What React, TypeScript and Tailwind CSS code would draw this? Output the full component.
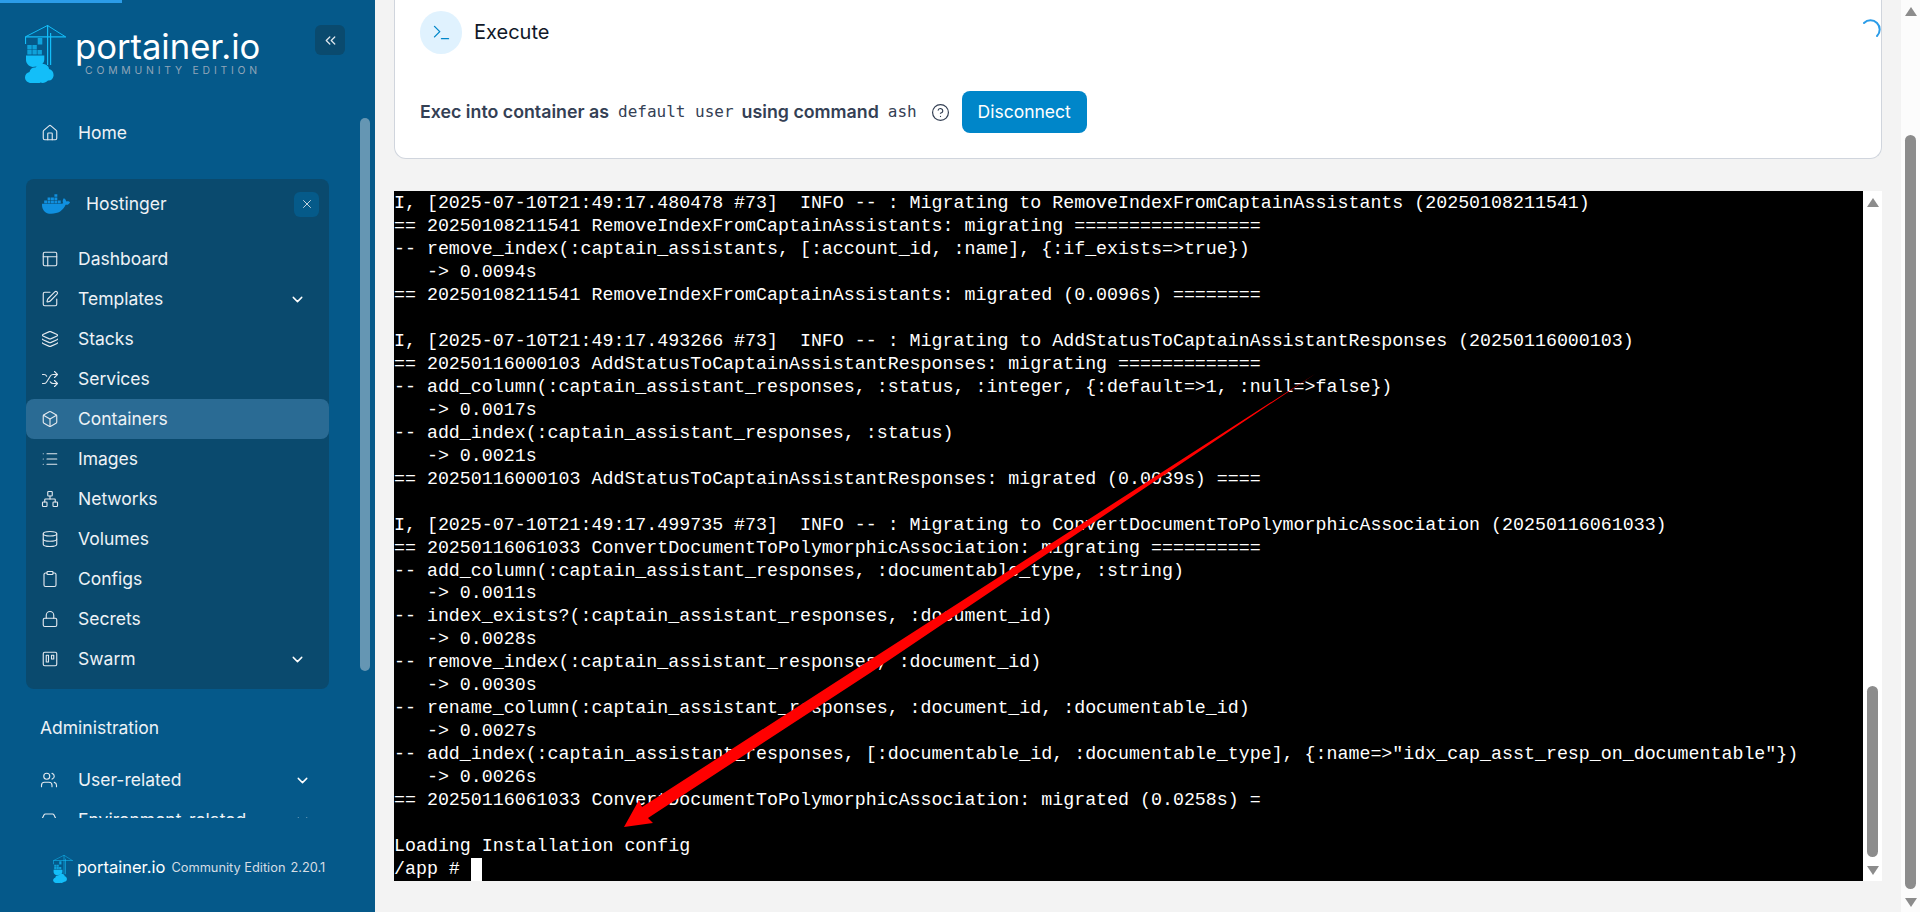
import React from 'react';
import { Home, PanelsTopLeft, SquarePen, Layers, Shuffle, Box, List, Network, Database, Clipboard, Lock, Trello, Users, HardDrive, ChevronDown, ChevronsLeft, X, Terminal, CircleHelp } from 'lucide-react';
import { FaDocker } from 'react-icons/fa';

const LOG = `I, [2025-07-10T21:49:17.480478 #73]  INFO -- : Migrating to RemoveIndexFromCaptainAssistants (20250108211541)
== 20250108211541 RemoveIndexFromCaptainAssistants: migrating =================
-- remove_index(:captain_assistants, [:account_id, :name], {:if_exists=>true})
   -> 0.0094s
== 20250108211541 RemoveIndexFromCaptainAssistants: migrated (0.0096s) ========

I, [2025-07-10T21:49:17.493266 #73]  INFO -- : Migrating to AddStatusToCaptainAssistantResponses (20250116000103)
== 20250116000103 AddStatusToCaptainAssistantResponses: migrating =============
-- add_column(:captain_assistant_responses, :status, :integer, {:default=>1, :null=>false})
   -> 0.0017s
-- add_index(:captain_assistant_responses, :status)
   -> 0.0021s
== 20250116000103 AddStatusToCaptainAssistantResponses: migrated (0.0039s) ====

I, [2025-07-10T21:49:17.499735 #73]  INFO -- : Migrating to ConvertDocumentToPolymorphicAssociation (20250116061033)
== 20250116061033 ConvertDocumentToPolymorphicAssociation: migrating ==========
-- add_column(:captain_assistant_responses, :documentable_type, :string)
   -> 0.0011s
-- index_exists?(:captain_assistant_responses, :document_id)
   -> 0.0028s
-- remove_index(:captain_assistant_responses, :document_id)
   -> 0.0030s
-- rename_column(:captain_assistant_responses, :document_id, :documentable_id)
   -> 0.0027s
-- add_index(:captain_assistant_responses, [:documentable_id, :documentable_type], {:name=>"idx_cap_asst_resp_on_documentable"})
   -> 0.0026s
== 20250116061033 ConvertDocumentToPolymorphicAssociation: migrated (0.0258s) =

Loading Installation config`;

function Logo({ className }: { className: string }) {
  return (
    <svg viewBox="0 0 41 58" className={className} fill="#13bef9">
      <path d="M0 11.2h41v1.2H0z" />
      <path d="M22.5 0.5 L1 11.5 M22.5 0.5 L40 11.5" stroke="#13bef9" strokeWidth="1" fill="none" />
      <path d="M22 0h1.2v40H22zM25 8h1.2v32H25z" />
      <path d="M0 12h1.1v7H0z" />
      <path d="M12.7 13h4.6v6.6h-4.6z" opacity=".75" />
      <path d="M2.3 20h4.4v4.4H2.3zM7.4 20h4.4v4.4H7.4zM2.3 25h4.4v4.4H2.3zM7.4 25h4.4v4.4H7.4zM12.5 25h4.4v4.4h-4.4z" opacity=".72" />
      <path d="M1 30.5h18.3v4c0 3-2 5-4 5.500-3 1-5 2-8 2-4-1-6.300-4-6.300-7z" />
      <path d="M6 58c-3 0-6-2.500-6-5.500 0-3 2-5 4.500-5.500.5-3 3-5 6-4.500 2-3 6-5 10-3 2.500 1 3.500 3 3.500 4.500 3 .5 5 3.500 4.500 7-.5 3-2.500 5-5.500 4.500-2 2-5 3-7.500 2-2 1.500-6 1.500-10 .5z" />
    </svg>
  );
}

function Item({ icon: Icon, label, chevron, active }: { icon: React.ElementType; label: string; chevron?: boolean; active?: boolean }) {
  return (
    <div className={`flex h-10 items-center rounded-lg pl-[15px] pr-[23px] ${active ? 'bg-[#2a6b94]' : ''}`}>
      <Icon className="h-[18px] w-[18px] shrink-0 text-[#e4e9ef]" strokeWidth={1.5} />
      <span className="ml-[19px] flex-1 text-[17.5px] text-[#eef2f6]">{label}</span>
      {chevron && <ChevronDown className="h-[17px] w-[17px] text-white" strokeWidth={2} />}
    </div>
  );
}

function Arrow({ up }: { up?: boolean }) {
  return (
    <div className={`h-0 w-0 border-x-[6px] border-x-transparent ${up ? 'border-b-[9px] border-b-[#8c8c8c]' : 'border-t-[9px] border-t-[#8c8c8c]'}`} />
  );
}

export default function App() {
  const env = [
    { icon: PanelsTopLeft, label: 'Dashboard' },
    { icon: SquarePen, label: 'Templates', chevron: true },
    { icon: Layers, label: 'Stacks' },
    { icon: Shuffle, label: 'Services' },
    { icon: Box, label: 'Containers', active: true },
    { icon: List, label: 'Images' },
    { icon: Network, label: 'Networks' },
    { icon: Database, label: 'Volumes' },
    { icon: Clipboard, label: 'Configs' },
    { icon: Lock, label: 'Secrets' },
    { icon: Trello, label: 'Swarm', chevron: true },
  ];
  return (
    <div className="relative flex h-[912px] w-[1920px] overflow-hidden bg-[#f3f3f3] font-['Inter',sans-serif]">
      <div className="absolute left-0 top-0 z-20 h-[3px] w-[122px] bg-[#2b9ce8]" />

      <aside className="relative flex h-full w-[375px] shrink-0 flex-col bg-[#05598a]">
        <div className="flex h-[119px] shrink-0 items-start pl-[25px] pt-[25px]">
          <Logo className="h-[58px] w-[41px] shrink-0" />
          <div className="ml-[9px] flex w-[190px] shrink-0 flex-col">
            <span className="mt-[2px] whitespace-nowrap text-[34.6px] font-normal leading-[38px] text-white">portainer.io</span>
            <span className="ml-[10px] mt-[-1px] whitespace-nowrap text-[10.4px] leading-[14px] tracking-[3.8px] text-[#8fa5b8]">COMMUNITY EDITION</span>
          </div>
          <div className="ml-[50px] flex h-[30px] w-[30px] shrink-0 items-center justify-center rounded-md bg-[#0a4a6e]">
            <ChevronsLeft className="h-[17px] w-[17px] text-[#dfe6ec]" strokeWidth={1.8} />
          </div>
        </div>

        <nav className="h-[699px] shrink-0 overflow-hidden">
          <div className="ml-[25px] flex h-[28px] w-[310px] items-center pl-[16px]">
            <Home className="h-[18px] w-[18px] text-[#e4e9ef]" strokeWidth={1.5} />
            <span className="ml-[19px] text-[17.5px] text-[#eef2f6]">Home</span>
          </div>

          <div className="ml-[26px] mt-[32px] w-[303px] rounded-lg bg-[#0a4a6e] pb-[10px]">
            <div className="flex h-[48px] items-center pl-[16px] pr-[10px] pt-[2px]">
              <FaDocker className="h-[26px] w-[28px] text-[#1090e0]" />
              <span className="ml-[16px] flex-1 text-[17.5px] text-[#eef2f6]">Hostinger</span>
              <div className="flex h-[25px] w-[25px] items-center justify-center rounded-md bg-[#055a89]">
                <X className="h-[14px] w-[14px] text-[#dfe6ec]" strokeWidth={1.5} />
              </div>
            </div>
            <div className="mt-[12px]">
              {env.map((e) => (
                <Item key={e.label} {...e} />
              ))}
            </div>
          </div>

          <div className="ml-[40px] mt-[25px] text-[17.5px] leading-[28px] text-[#eef2f6]">Administration</div>

          <div className="ml-[25px] mt-[18px] w-[310px]">
            <div className="flex h-10 items-center pl-[15px] pr-[24px]">
              <Users className="h-[18px] w-[18px] text-[#e4e9ef]" strokeWidth={1.5} />
              <span className="ml-[20px] flex-1 text-[17.5px] text-[#eef2f6]">User-related</span>
              <ChevronDown className="h-[17px] w-[17px] text-white" strokeWidth={2} />
            </div>
            <div className="flex h-10 items-center pl-[15px] pr-[24px]">
              <HardDrive className="h-[18px] w-[18px] text-[#e4e9ef]" strokeWidth={1.5} />
              <span className="ml-[20px] flex-1 text-[17.5px] text-[#eef2f6]">Environment-related</span>
              <ChevronDown className="h-[17px] w-[17px] text-white" strokeWidth={2} />
            </div>
          </div>
        </nav>

        <div className="flex flex-1 items-start pl-[53px] pt-[37px]">
          <Logo className="h-[28px] w-[20px] shrink-0" />
          <span className="ml-[4px] mt-[1px] whitespace-nowrap text-[16.5px] leading-[22px] text-white">portainer.io</span>
          <span className="ml-[6px] mt-[3px] whitespace-nowrap text-[12.8px] leading-[20px] text-[#d5dde4]">Community Edition</span>
          <span className="ml-[5px] mt-[3px] text-[12.8px] leading-[20px] text-[#d5dde4]">2.20.1</span>
        </div>

        <div className="absolute left-[360px] top-[118px] h-[553px] w-[10px] rounded-md bg-[#6596b3]" />
      </aside>

      <main className="flex min-w-0 flex-1 flex-col pl-[19px] pr-[19px]">
        <section className="relative h-[159px] w-[1488px] shrink-0 rounded-b-xl border-x border-b border-[#d0d5dd] bg-white pl-[25px]">
          <div className="flex items-center pt-[11px]">
            <div className="flex h-[43px] w-[42px] items-center justify-center rounded-full bg-[#e0f2fe]">
              <Terminal className="h-[21px] w-[21px] text-[#0086c9]" strokeWidth={1.6} />
            </div>
            <span className="ml-[12px] -translate-y-px text-[20px] text-[#101828]">Execute</span>
          </div>
          <div className="mt-[37px] flex items-center">
            <span className="text-[17.8px] font-semibold text-[#344054]">Exec into container as</span>
            <code className="ml-[9px] font-['DejaVu_Sans_Mono',monospace] text-[16px] text-[#344054]">default user</code>
            <span className="ml-[8px] text-[17.8px] font-semibold text-[#344054]">using command</span>
            <code className="ml-[9px] font-['DejaVu_Sans_Mono',monospace] text-[16px] text-[#344054]">ash</code>
            <CircleHelp className="ml-[14px] h-[19px] w-[19px] text-[#344054]" strokeWidth={1.5} />
            <button className="ml-[12px] flex h-[42px] w-[125px] items-center justify-center rounded-lg bg-[#0086c9] text-[17.5px] text-white">Disconnect</button>
          </div>
          <svg viewBox="0 0 20 20" className="absolute right-[-1px] top-[19px] h-5 w-5">
            <path d="M2 4 A 8.5 8.5 0 0 1 15 17" fill="none" stroke="#2b9ce8" strokeWidth="2" strokeLinecap="round" />
          </svg>
        </section>

        <section className="relative mt-[32px] flex h-[690px] w-[1488px] shrink-0 overflow-hidden">
          <div className="w-[1469px] shrink-0 overflow-hidden bg-black pt-[1px]">
            <pre className="font-['Liberation_Mono',monospace] text-[18.3px] leading-[22.97px] text-white">{LOG}{'\n/app # '}<span className="inline-block h-[23px] w-[11px] align-top bg-white" /></pre>
          </div>
          <div className="flex w-[19px] shrink-0 flex-col items-center bg-white pt-[7px]">
            <Arrow up />
            <div className="mt-[479px] h-[171px] w-[11px] rounded-md bg-[#8c8c8c]" />
            <div className="mt-[9px]"><Arrow /></div>
          </div>
        </section>
      </main>

      <div className="flex w-[19px] shrink-0 flex-col items-center bg-[#fcfcfc] pt-[7px]">
        <Arrow up />
        <div className="mt-[119px] h-[754px] w-[11px] rounded-md bg-[#8c8c8c]" />
        <div className="mt-[9px]"><Arrow /></div>
      </div>

      <svg className="pointer-events-none absolute inset-0 z-10 h-[912px] w-[1920px]" viewBox="0 0 1920 912">
        <path d="M1315 374 L1153 478 L870 660 L642 807 L639 800 L624 827 L653 823 L648 818 L870 673 L1153 482.500 Z" fill="#ff0000" />
      </svg>
    </div>
  );
}
